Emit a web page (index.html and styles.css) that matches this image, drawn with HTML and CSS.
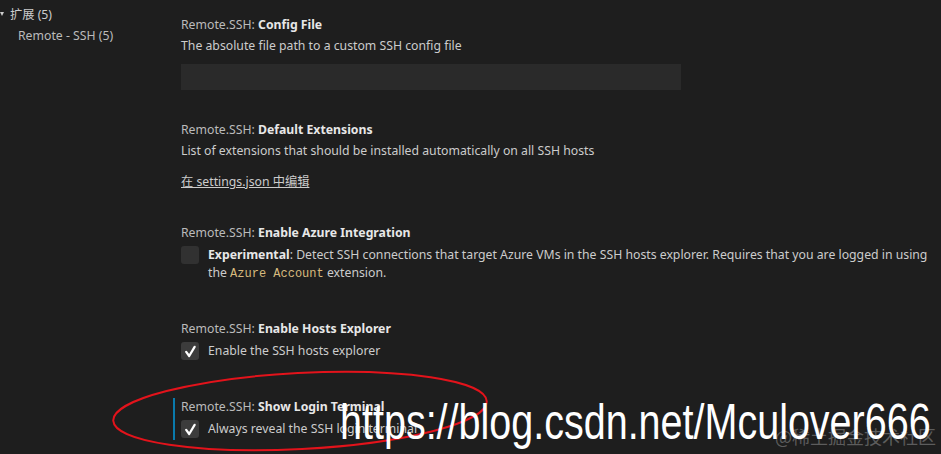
FILE: index.html
```html
<!DOCTYPE html>
<html lang="zh">
<head>
<meta charset="utf-8">
<title>Remote SSH settings</title>
<link rel="stylesheet" href="styles.css">
</head>
<body>
<div class="app">
  <aside class="toc">
    <div class="toc-group"><span class="caret"></span><span class="toc-label">扩展 (5)</span></div>
    <div class="toc-item">Remote - SSH (5)</div>
  </aside>
  <main class="settings">
    <section class="setting gap-input">
      <div class="title"><span class="cat">Remote.SSH: </span><span class="name">Config File</span></div>
      <div class="desc">The absolute file path to a custom SSH config file</div>
      <div class="input"></div>
    </section>
    <section class="setting gap-link">
      <div class="title"><span class="cat">Remote.SSH: </span><span class="name">Default Extensions</span></div>
      <div class="desc">List of extensions that should be installed automatically on all SSH hosts</div>
      <a class="edit-link">在 settings.json 中编辑</a>
    </section>
    <section class="setting gap-check">
      <div class="title"><span class="cat">Remote.SSH: </span><span class="name">Enable Azure Integration</span></div>
      <div class="check-row">
        <span class="checkbox"></span>
        <div class="check-text"><strong>Experimental</strong>: Detect SSH connections that target Azure VMs in the SSH hosts explorer. Requires that you are logged in using the <code>Azure Account</code> extension.</div>
      </div>
    </section>
    <section class="setting gap-check2">
      <div class="title"><span class="cat">Remote.SSH: </span><span class="name">Enable Hosts Explorer</span></div>
      <div class="check-row">
        <span class="checkbox checked"><svg viewBox="0 0 16 16" width="15" height="15"><path d="M3.4 8.4 L6.6 12.8 L12.4 3.0" fill="none" stroke="#fff" stroke-width="2.4" stroke-linecap="round" stroke-linejoin="round"/></svg></span>
        <div class="check-text">Enable the SSH hosts explorer</div>
      </div>
    </section>
    <section class="setting focused">
      <div class="title"><span class="cat">Remote.SSH: </span><span class="name">Show Login Terminal</span></div>
      <div class="check-row">
        <span class="checkbox checked"><svg viewBox="0 0 16 16" width="15" height="15"><path d="M3.4 8.4 L6.6 12.8 L12.4 3.0" fill="none" stroke="#fff" stroke-width="2.4" stroke-linecap="round" stroke-linejoin="round"/></svg></span>
        <div class="check-text">Always reveal the SSH login terminal</div>
      </div>
    </section>
  </main>
</div>
<svg class="annot" width="941" height="454" viewBox="0 0 941 454">
  <ellipse cx="300" cy="411" rx="187" ry="38" transform="rotate(-3 300 411)" fill="none" stroke="#e3131b" stroke-width="2"/>
</svg>
<div class="wm-url">https://blog.csdn.net/Mculover666</div>
<div class="wm-site">@稀土掘金技术社区</div>
</body>
</html>
```
FILE: styles.css
```css
html, body {
  margin: 0;
  padding: 0;
  background: #1e1e1e;
  width: 941px;
  height: 454px;
  overflow: hidden;
}
body {
  font-family: "Noto Sans", "Noto Sans CJK SC", sans-serif;
  font-size: 12.25px;
  color: #cccccc;
  position: relative;
}
.app {
  display: flex;
}
.toc {
  width: 173px;
  flex: none;
  padding-top: 3px;
}
.toc-group {
  display: flex;
  align-items: center;
  height: 22px;
  color: #cccccc;
}
.caret {
  width: 0;
  height: 0;
  border-left: 2px solid transparent;
  border-right: 2px solid transparent;
  border-top: 4px solid #cccccc;
  margin-right: 6px;
}
.toc-item {
  height: 22px;
  line-height: 22px;
  padding-left: 18px;
  color: #bbbbbb;
}
.settings {
  width: 768px;
  padding-top: 16px;
  display: flex;
  flex-direction: column;
}
.setting {
  border-left: 2px solid transparent;
  padding-left: 6px;
}
.gap-input { margin-bottom: 31px; }
.gap-link { margin-bottom: 33px; }
.gap-check { margin-bottom: 37px; }
.gap-check2 { margin-bottom: 38px; }
.focused {
  border-left-color: #0a7aab;
  padding-bottom: 2px;
}
.title {
  height: 18px;
  line-height: 18px;
  white-space: nowrap;
}
.cat {
  color: #bbbbbb;
}
.name {
  color: #e7e7e7;
  font-weight: 700;
}
.desc {
  margin-top: 3px;
  line-height: 18px;
  color: #cccccc;
}
.input {
  margin-top: 9px;
  width: 500px;
  height: 26px;
  background: #2a2a2a;
}
.edit-link {
  display: block;
  margin-top: 13px;
  line-height: 18px;
  color: #cccccc;
  text-decoration: underline;
}
.check-row {
  display: flex;
  align-items: flex-start;
  margin-top: 4px;
}
.checkbox {
  flex: none;
  width: 18px;
  height: 18px;
  border-radius: 3px;
  background: #313131;
  margin-right: 9px;
  display: flex;
  align-items: center;
  justify-content: center;
}
.checkbox.checked {
  background: #3c3c3c;
}
.check-text {
  line-height: 18px;
  color: #cccccc;
}
.check-text strong {
  color: #e7e7e7;
  font-weight: 700;
}
code {
  font-family: "Liberation Mono", monospace;
  font-size: 12px;
  color: #d7ba7d;
}
.annot {
  position: absolute;
  left: 0;
  top: 0;
  pointer-events: none;
}
.wm-url {
  position: absolute;
  left: 340px;
  top: 394px;
  font-family: "Liberation Sans", Arial, sans-serif;
  font-size: 50px;
  line-height: 56px;
  color: #ffffff;
  white-space: nowrap;
  transform: scaleX(0.79);
  transform-origin: left top;
}
.wm-site {
  position: absolute;
  left: 775px;
  top: 425px;
  font-family: "Noto Sans CJK SC", sans-serif;
  font-size: 18px;
  line-height: 22px;
  color: rgba(255, 255, 255, 0.28);
  white-space: nowrap;
}
```
